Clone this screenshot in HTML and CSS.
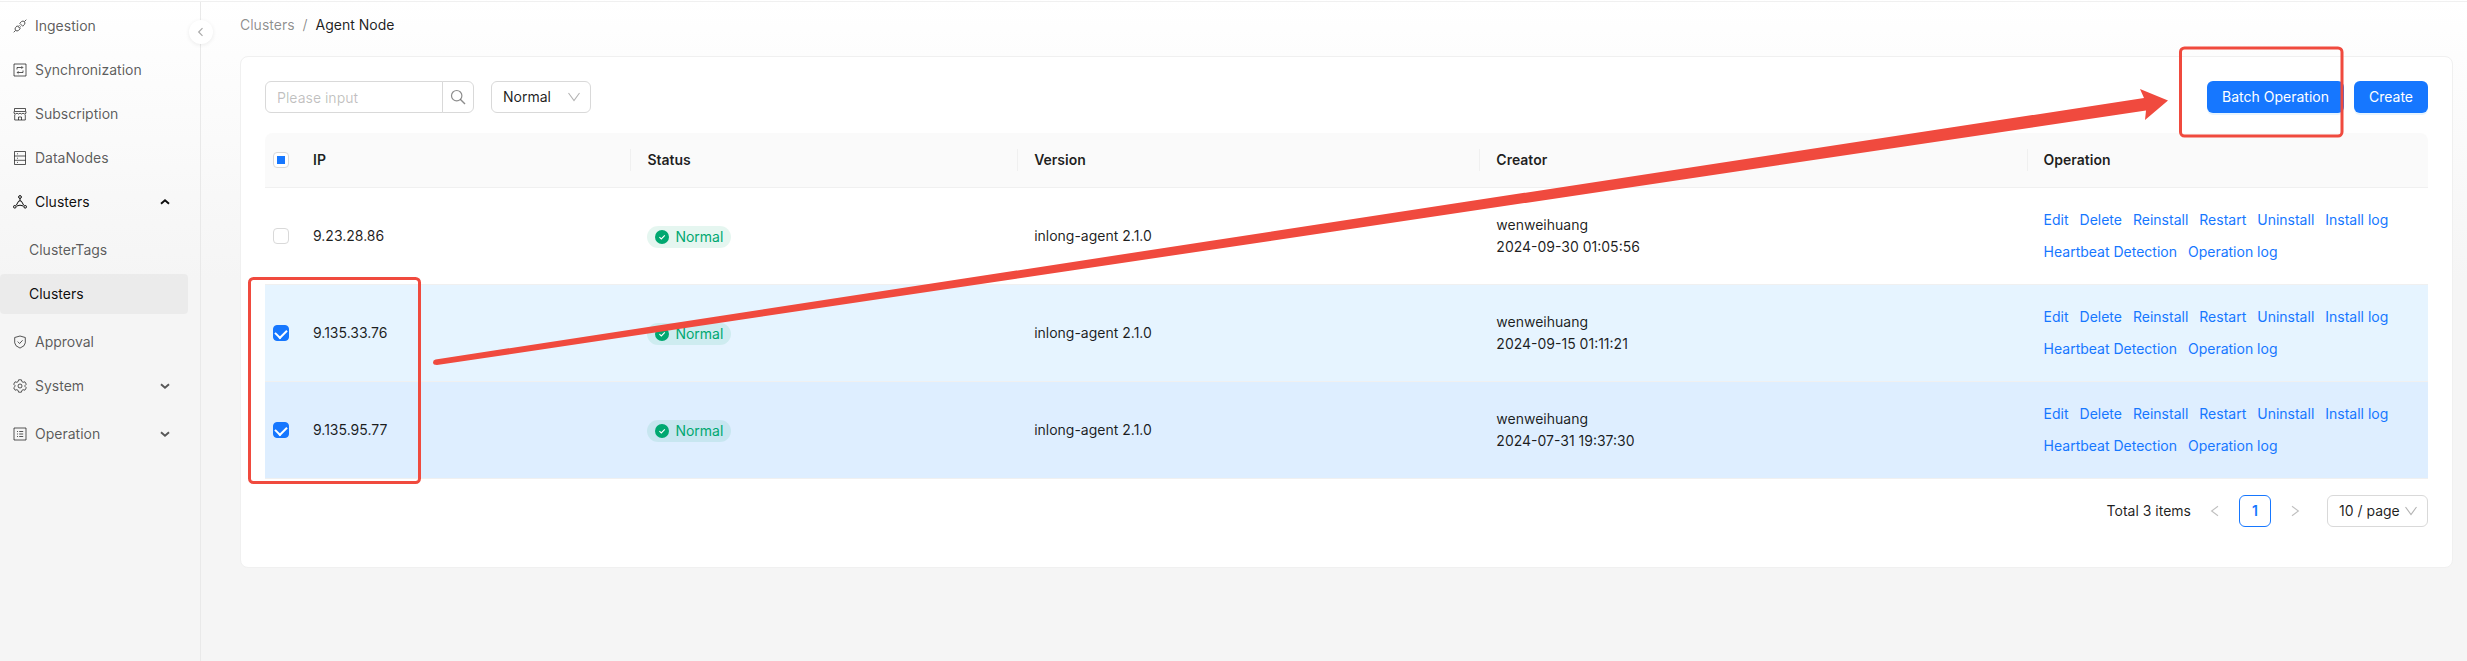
FILE: index.html
```html
<!DOCTYPE html>
<html lang="en">
<head>
<meta charset="utf-8">
<title>Agent Node</title>
<link rel="stylesheet" href="styles.css">
</head>
<body>
<svg class="defs" aria-hidden="true">
  <symbol id="i-down" viewBox="0 0 12 12"><path d="M.5 2 6 9.500l5.500-7.500" fill="none" stroke="currentColor" stroke-width="1.100"/></symbol>
  <symbol id="i-caret" viewBox="0 0 10 10"><path d="M1 3.200 5 6.800l4-3.600" fill="none" stroke="currentColor" stroke-width="1.900"/></symbol>
  <symbol id="i-left" viewBox="0 0 12 12"><path d="M9 1.200 2.600 6 9 10.800" fill="none" stroke="currentColor" stroke-width="1.100"/></symbol>
  <symbol id="i-ok" viewBox="0 0 14 14"><circle cx="7" cy="7" r="7" fill="#00a870"/><path d="m4.400 7.100 1.900 1.900 3.500-3.700" fill="none" stroke="#fff" stroke-width="1.100"/></symbol>
</svg>
<div class="layout">
  <aside class="sider">
    <button class="collapse" aria-label="Collapse menu"><svg width="10" height="10" viewBox="0 0 10 10"><path d="M6.500 1.200 2.700 5l3.800 3.800" fill="none" stroke="currentColor" stroke-width="1.200"/></svg></button>
    <nav class="menu">
      <a class="item" href="#"><svg class="ico" viewBox="0 0 14 14"><path d="M13.300.7 11.400 2.600M.7 13.300 2.600 11.400M6.800 4.300 8.700 2.400a2.100 2.100 0 0 1 2.900 2.900L9.700 7.200zM4.300 6.800 2.400 8.700a2.100 2.100 0 0 0 2.900 2.900L7.200 9.700zM5.100 7.600l1.400-1.400M6.400 8.900l1.400-1.400"/></svg><span>Ingestion</span></a>
      <a class="item" href="#"><svg class="ico" viewBox="0 0 14 14"><path d="M1 1h12v12H1zM4 6.500v-2h5.500M8.500 3.200 9.800 4.500 8.500 5.800M10 7.500v2H4.500M5.500 8.200 4.200 9.500l1.300 1.300"/></svg><span>Synchronization</span></a>
      <a class="item" href="#"><svg class="ico" viewBox="0 0 14 14"><path d="M1.500 1.500h11v3h-11zM1 4.500v1.700q1.500 1.600 3 0 1.500 1.600 3 0 1.500 1.600 3 0 1.500 1.600 3 0V4.500M1.700 7.500V13h10.600V7.500M5.500 13V10h3v3"/></svg><span>Subscription</span></a>
      <a class="item" href="#"><svg class="ico" viewBox="0 0 14 14"><path d="M1.500.500h11v13h-11zM1.500 5h11M1.500 9.300h11M4 2.800h1M4 7.200h1M4 11.400h1"/></svg><span>DataNodes</span></a>
      <a class="item open" href="#"><svg class="ico" viewBox="0 0 14 14"><circle cx="7" cy="2" r="1.400"/><circle cx="1.800" cy="11.800" r="1.300"/><circle cx="12.200" cy="11.800" r="1.300"/><path d="M7 3.400v2.400M5.600 6.200 3.300 10.200M8.400 6.200l2.300 4M5.600 6.200q1.400-.8 2.800 0M3.600 11q3.400-1.600 6.800 0"/></svg><span>Clusters</span><svg class="caret up"><use href="#i-caret"/></svg></a>
      <div class="sub">
        <a class="item" href="#">ClusterTags</a>
        <a class="item selected" href="#">Clusters</a>
      </div>
      <a class="item" href="#"><svg class="ico" viewBox="0 0 14 14"><path d="M7 1 12.300 2.500v5.300q0 3.200-5.300 5.300Q1.700 11 1.700 7.800V2.500zM4.700 6.600l1.900 1.900 3-3.200"/></svg><span>Approval</span></a>
      <a class="item" href="#"><svg class="ico" viewBox="0 0 14 14"><path d="M5.600 .800h2.800l.500 1.800 1.200.700 1.800-.5 1.400 2.400L12 6.500v1l1.300 1.300-1.400 2.400-1.800-.5-1.200.700-.5 1.800H5.600l-.5-1.800-1.200-.700-1.800.5L.700 8.800 2 7.500v-1L.700 5.200l1.400-2.400 1.800.5 1.200-.700z"/><circle cx="7" cy="7" r="2"/></svg><span>System</span><svg class="caret"><use href="#i-caret"/></svg></a>
      <a class="item spaced" href="#"><svg class="ico" viewBox="0 0 14 14"><path d="M1 1h12v12H1zM6.200 4.500h4M6.200 7h4M6.200 9.500h4M4 4.500h1M4 7h1M4 9.500h1"/></svg><span>Operation</span><svg class="caret"><use href="#i-caret"/></svg></a>
    </nav>
  </aside>
  <main class="main">
    <nav class="crumbs"><a href="#">Clusters</a><span class="sep">/</span><span class="here">Agent Node</span></nav>
    <section class="card">
      <div class="toolbar">
        <div class="search">
          <input type="text" placeholder="Please input" aria-label="Search">
          <button aria-label="Search"><svg width="16" height="16" viewBox="0 0 16 16"><circle cx="6.700" cy="6.700" r="5.200" fill="none" stroke="currentColor" stroke-width="1.200"/><path d="m10.500 10.500 4.500 4.500" stroke="currentColor" stroke-width="1.400"/></svg></button>
        </div>
        <div class="picker"><select aria-label="Status"><option>Normal</option></select><svg class="down"><use href="#i-down"/></svg></div>
        <div class="actions">
          <button class="primary">Batch Operation</button>
          <button class="primary">Create</button>
        </div>
      </div>
      <table class="table">
        <colgroup><col class="c-check"><col class="c-ip"><col class="c-status"><col class="c-version"><col class="c-creator"><col></colgroup>
        <thead>
          <tr><th class="check"><input type="checkbox" class="some" aria-label="Select all"></th><th>IP</th><th>Status</th><th>Version</th><th>Creator</th><th>Operation</th></tr>
        </thead>
        <tbody>
          <tr>
            <td class="check"><input type="checkbox" aria-label="Select 9.23.28.86"></td>
            <td>9.23.28.86</td>
            <td><span class="tag"><svg><use href="#i-ok"/></svg>Normal</span></td>
            <td>inlong-agent 2.1.0</td>
            <td>wenweihuang<br>2024-09-30 01:05:56</td>
            <td><div class="ops"><a href="#">Edit</a><a href="#">Delete</a><a href="#">Reinstall</a><a href="#">Restart</a><a href="#">Uninstall</a><a href="#">Install log</a><a href="#">Heartbeat Detection</a><a href="#">Operation log</a></div></td>
          </tr>
          <tr class="picked">
            <td class="check"><input type="checkbox" checked aria-label="Select 9.135.33.76"></td>
            <td>9.135.33.76</td>
            <td><span class="tag"><svg><use href="#i-ok"/></svg>Normal</span></td>
            <td>inlong-agent 2.1.0</td>
            <td>wenweihuang<br>2024-09-15 01:11:21</td>
            <td><div class="ops"><a href="#">Edit</a><a href="#">Delete</a><a href="#">Reinstall</a><a href="#">Restart</a><a href="#">Uninstall</a><a href="#">Install log</a><a href="#">Heartbeat Detection</a><a href="#">Operation log</a></div></td>
          </tr>
          <tr class="picked hover">
            <td class="check"><input type="checkbox" checked aria-label="Select 9.135.95.77"></td>
            <td>9.135.95.77</td>
            <td><span class="tag"><svg><use href="#i-ok"/></svg>Normal</span></td>
            <td>inlong-agent 2.1.0</td>
            <td>wenweihuang<br>2024-07-31 19:37:30</td>
            <td><div class="ops"><a href="#">Edit</a><a href="#">Delete</a><a href="#">Reinstall</a><a href="#">Restart</a><a href="#">Uninstall</a><a href="#">Install log</a><a href="#">Heartbeat Detection</a><a href="#">Operation log</a></div></td>
          </tr>
        </tbody>
      </table>
      <div class="pager">
        <span class="total">Total 3 items</span>
        <button class="arrow" aria-label="Previous page"><svg width="12" height="12"><use href="#i-left"/></svg></button>
        <button class="page">1</button>
        <button class="arrow next" aria-label="Next page"><svg width="12" height="12"><use href="#i-left"/></svg></button>
        <div class="picker size"><select aria-label="Page size"><option>10 / page</option></select><svg class="down"><use href="#i-down"/></svg></div>
      </div>
    </section>
  </main>
  <svg class="marks" viewBox="0 0 2467 661" aria-hidden="true">
    <rect x="249.500" y="278.500" width="170" height="204" rx="4"/>
    <rect x="2180.500" y="48" width="161.500" height="88" rx="4"/>
    <path d="M435.500 359.500 2144 98l-4-9 28 11.500-23 19.500 1-9.500L437 365q-4 0-4-2.500t2.500-3z"/>
  </svg>
</div>
</body>
</html>
```

FILE: styles.css
```css
* { box-sizing: border-box; }

body {
  margin: 0;
  font: 14px/22px Inter, "Liberation Sans", sans-serif;
  color: rgba(0, 0, 0, .88);
}

a { color: inherit; text-decoration: none; }
button, input, select { font: inherit; color: inherit; margin: 0; }
.defs { position: absolute; width: 0; height: 0; }

.layout {
  position: relative;
  display: flex;
  min-height: 100vh;
  padding-top: 2px;
  background: linear-gradient(#fff, #f5f5f5 280px);
}
.layout::before {
  content: "";
  position: absolute;
  inset: 1px 0 auto;
  height: 1px;
  background: #f0f0f0;
}

/* Side menu */
.sider {
  position: relative;
  flex: 0 0 201px;
  border-right: 1px solid #e9e9e9;
  padding: 4px 12px 0 0;
}
.collapse {
  position: absolute;
  top: 18px;
  right: -13px;
  display: grid;
  place-items: center;
  width: 24px;
  height: 24px;
  padding: 0;
  border: 0;
  border-radius: 50%;
  background: #fff;
  color: #aaa;
  box-shadow: 0 1px 4px rgba(0, 0, 0, .08);
}
.menu { display: flex; flex-direction: column; gap: 4px; }
.item {
  display: flex;
  align-items: center;
  gap: 8px;
  height: 40px;
  padding: 0 18px 0 13px;
  border-radius: 4px;
  color: rgba(0, 0, 0, .65);
}
.item.open, .item.selected { color: rgba(0, 0, 0, .95); }
.ico {
  width: 14px;
  height: 14px;
  fill: none;
  stroke: currentColor;
  stroke-width: 1;
}
.caret { width: 10px; height: 10px; margin-left: auto; }
.caret.up { transform: rotate(180deg); }
.sub { display: flex; flex-direction: column; gap: 4px; padding: 4px 0; }
.sub .item { padding-left: 29px; }
.sub .selected { background: rgba(0, 0, 0, .04); }
.spaced { margin-top: 4px; }

/* Content */
.main { flex: 1; min-width: 0; padding: 12px 14px 40px 39px; }
.crumbs { display: flex; gap: 8px; margin-bottom: 20px; }
.crumbs a, .sep { color: rgba(0, 0, 0, .45); }
.card {
  padding: 24px 24px 40px;
  border: 1px solid #f0f0f0;
  border-radius: 8px;
  background: #fff;
}
.toolbar { display: flex; align-items: center; margin-bottom: 20px; }
.search { display: flex; margin-right: 17px; }
.search input {
  width: 178px;
  height: 32px;
  padding: 0 11px;
  border: 1px solid #d9d9d9;
  border-radius: 6px 0 0 6px;
  background: #fff;
}
.search input::placeholder { color: rgba(0, 0, 0, .25); }
.search button {
  display: grid;
  place-items: center;
  width: 32px;
  margin-left: -1px;
  padding: 0;
  border: 1px solid #d9d9d9;
  border-radius: 0 6px 6px 0;
  background: #fff;
  color: rgba(0, 0, 0, .45);
}
.picker { position: relative; width: 100px; }
.picker select {
  appearance: none;
  width: 100%;
  height: 32px;
  padding: 0 11px;
  border: 1px solid #d9d9d9;
  border-radius: 6px;
  background: #fff;
}
.down {
  position: absolute;
  top: 10px;
  right: 11px;
  width: 12px;
  height: 12px;
  color: rgba(0, 0, 0, .3);
  pointer-events: none;
}
.actions { display: flex; gap: 10px; margin-left: auto; }
.primary {
  height: 32px;
  padding: 0 15px;
  border: 0;
  border-radius: 6px;
  background: #1677ff;
  color: #fff;
  box-shadow: 0 2px 0 rgba(5, 145, 255, .1);
}

/* Table */
.table {
  width: 100%;
  table-layout: fixed;
  border-collapse: separate;
  border-spacing: 0;
}
.c-check { width: 32px; }
.c-ip { width: 15.46%; }
.c-status { width: 17.88%; }
.c-version { width: 21.37%; }
.c-creator { width: 25.3%; }
.table th, .table td {
  padding: 16px;
  border-bottom: 1px solid #f0f0f0;
  text-align: left;
}
.table th {
  position: relative;
  background: #fafafa;
  font-weight: 600;
}
.table th:first-child { border-top-left-radius: 8px; }
.table th:last-child { border-top-right-radius: 8px; }
.table th:nth-child(n+3)::before {
  content: "";
  position: absolute;
  top: 16px;
  left: -1px;
  width: 1px;
  height: 22px;
  background: #f0f0f0;
}
.table .check { padding: 0 8px; line-height: 0; }
.picked td { background: #e6f4ff; }
.picked.hover td { background: #deeeff; }

input[type="checkbox"] {
  appearance: none;
  display: grid;
  place-items: center;
  width: 16px;
  height: 16px;
  border: 1px solid #d9d9d9;
  border-radius: 4px;
  background: #fff;
}
input[type="checkbox"]:checked { border-color: #1677ff; background: #1677ff; }
input[type="checkbox"]:checked::after {
  content: "";
  width: 6px;
  height: 9px;
  margin-bottom: 2px;
  border: solid #fff;
  border-width: 0 2px 2px 0;
  transform: rotate(45deg);
}
input.some::after { content: ""; width: 8px; height: 8px; background: #1677ff; }

.tag {
  display: inline-flex;
  align-items: center;
  gap: 6px;
  padding: 0 8px;
  border-radius: 11px;
  background: rgba(0, 168, 112, .1);
  color: #00a870;
  vertical-align: middle;
}
.tag svg { width: 14px; height: 14px; }
.ops {
  display: flex;
  flex-wrap: wrap;
  column-gap: 11px;
  line-height: 32px;
  color: #1677ff;
}

.pager { display: flex; align-items: center; gap: 8px; margin-top: 16px; }
.total { margin-left: auto; }
.pager button {
  display: grid;
  place-items: center;
  width: 32px;
  height: 32px;
  padding: 0;
  border: 0;
  border-radius: 6px;
  background: #fff;
}
.pager .arrow { color: rgba(0, 0, 0, .25); }
.pager .next svg { transform: rotate(180deg); }
.pager .page { border: 1px solid #1677ff; color: #1677ff; font-weight: 600; }
.picker.size { width: 101px; margin-left: 8px; }

/* Callouts drawn over the page */
.marks {
  position: absolute;
  top: 0;
  left: 0;
  width: 100%;
  pointer-events: none;
}
.marks rect { fill: none; stroke: #f04a3e; stroke-width: 3; }
.marks path { fill: #f04a3e; }
```
